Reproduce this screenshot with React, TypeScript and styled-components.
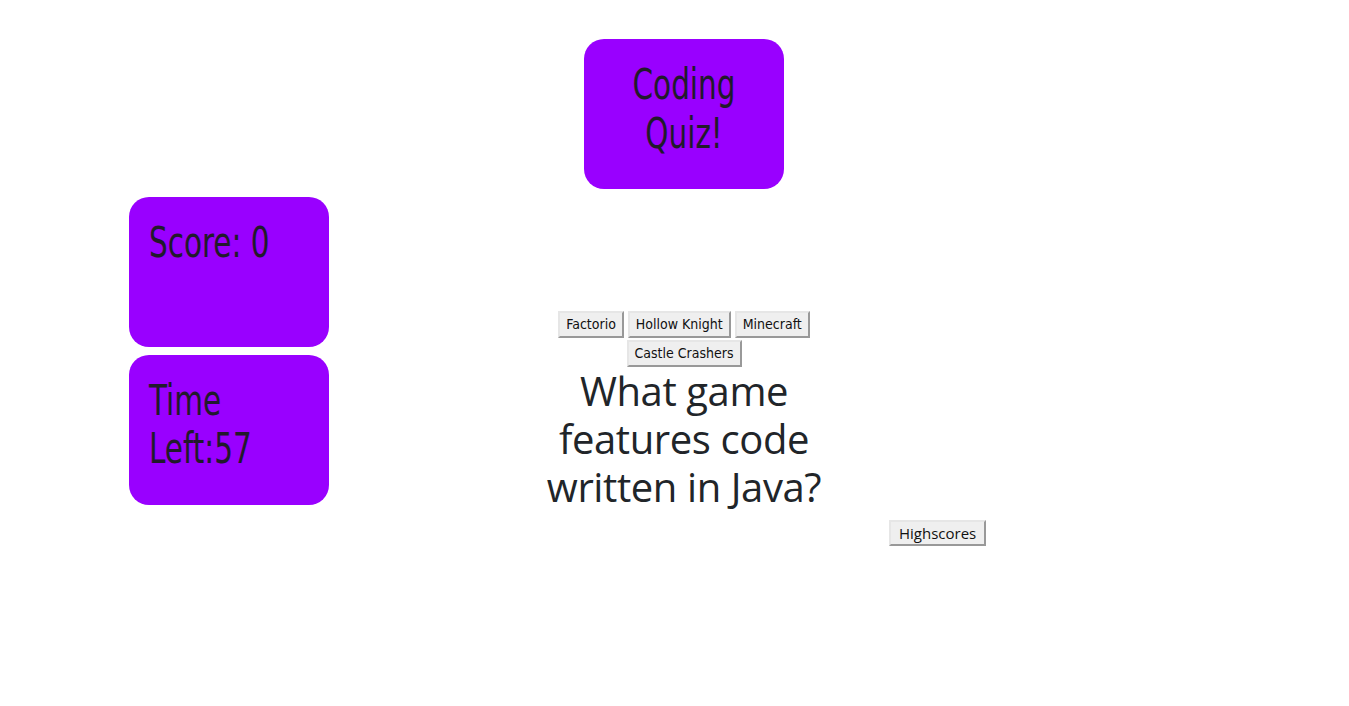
import styled, { createGlobalStyle } from 'styled-components';

const GlobalStyle = createGlobalStyle`
  body {
    margin: 0;
    background: #fff;
    color: #212529;
    font-family: 'Open Sans', 'Noto Sans', sans-serif;
  }
`;

// Closest installed stand-in for a tall condensed display face
const CONDENSED = `'DejaVu Sans Condensed', 'Liberation Sans Narrow', sans-serif`;

const Page = styled.div`
  display: grid;
  grid-template-columns: 200px 205px 300px 55px max-content;
  grid-template-areas:
    '. . title . .'
    'aside . main . .'
    '. . . . high';
  row-gap: 8px;
  padding: 39px 0 0 129px;
`;

const Card = styled.div`
  background: #9900ff;
  border-radius: 20px;
  width: 200px;
  height: 150px;
  box-sizing: border-box;
  padding: 22px 20px;
  font-family: ${CONDENSED};
  font-size: 42px;
  line-height: 48px;
  color: #211a2b;
`;

const TitleCard = styled(Card)`
  grid-area: title;
  justify-self: center;
  text-align: center;
  padding: 21px 30px;
  line-height: 49px;
`;

const CardText = styled.span<{ $center?: boolean }>`
  display: inline-block;
  transform: scaleX(0.78);
  transform-origin: ${p => (p.$center ? 'center' : 'left')} top;
`;

const Aside = styled.aside`
  grid-area: aside;
  display: flex;
  flex-direction: column;
  gap: 8px;
`;

const Main = styled.main`
  grid-area: main;
  padding-top: 114px;
  text-align: center;
`;

const Choices = styled.div`
  display: flex;
  flex-wrap: wrap;
  justify-content: center;
  gap: 2px 4px;
`;

const Choice = styled.button`
  font-family: ${CONDENSED};
  font-size: 14px;
  line-height: 19px;
  padding: 2px 6px;
  color: #111;
  background: #efefef;
  border: 2px solid;
  border-color: #e6e6e6 #999 #999 #e6e6e6;
  cursor: pointer;
`;

const Question = styled.div`
  font-size: 40px;
  line-height: 48px;
  letter-spacing: -0.4px;
  color: #212529;
`;

const HighscoresButton = styled.button`
  grid-area: high;
  margin-top: 1px;
  font-family: 'Open Sans', 'Noto Sans', sans-serif;
  font-size: 15px;
  line-height: 20px;
  padding: 1px 8px;
  color: #111;
  background: #efefef;
  border: 2px solid;
  border-color: #e6e6e6 #999 #999 #e6e6e6;
  cursor: pointer;
`;

const answers = ['Factorio', 'Hollow Knight', 'Minecraft', 'Castle Crashers'];

export default function App() {
  return (
    <>
      <GlobalStyle />
      <Page>
        <TitleCard>
          <CardText $center>Coding Quiz!</CardText>
        </TitleCard>
        <Aside>
          <Card>
            <CardText>Score: 0</CardText>
          </Card>
          <Card>
            <CardText>Time Left:57</CardText>
          </Card>
        </Aside>
        <Main>
          <Choices>
            {answers.map(a => (
              <Choice key={a}>{a}</Choice>
            ))}
          </Choices>
          <Question>What game features code written in Java?</Question>
        </Main>
        <HighscoresButton>Highscores</HighscoresButton>
      </Page>
    </>
  );
}
